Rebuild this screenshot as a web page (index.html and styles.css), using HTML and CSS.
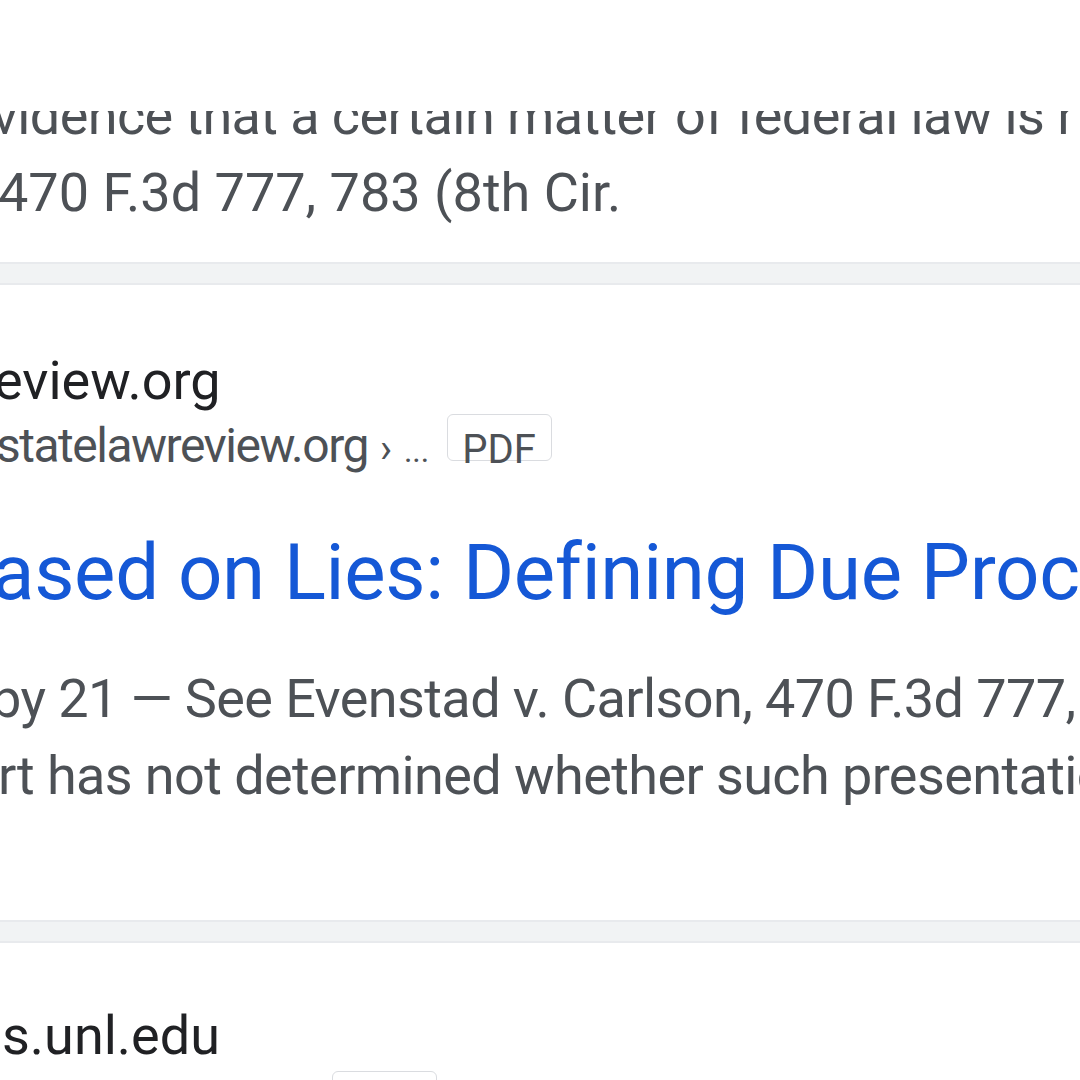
FILE: index.html
```html
<!DOCTYPE html>
<html lang="en">
<head>
<meta charset="utf-8">
<title>Search results</title>
<link rel="stylesheet" href="styles.css">
</head>
<body>
<div class="topbar"></div>
<main class="results">
  <section class="card card-first">
    <div class="snippet">
      <div class="line cut-ev">evidence that a certain matter of federal law is r</div>
      <div class="line cut-47 wide">470 F.3d 777, 783 (8th Cir.</div>
    </div>
  </section>
  <div class="sep"></div>
  <section class="card">
    <div class="site cut-site">eview.org</div>
    <div class="url">
      <span class="url-text cut-url">statelawreview.org</span>
      <span class="crumb">›</span>
      <span class="dots">...</span>
      <span class="badge">PDF</span>
    </div>
    <div class="title cut-title">ased on Lies: Defining Due Process</div>
    <div class="snippet">
      <div class="line cut-by">by 21 — See Evenstad v. Carlson, 470 F.3d 777, 783</div>
      <div class="line cut-rt">rt has not determined whether such presentation</div>
    </div>
  </section>
  <div class="sep"></div>
  <section class="card card-last">
    <div class="site cut-s">s.unl.edu</div>
    <div class="url">
      <span class="url-text spacer-url">digitalcommons.u</span>
      <span class="badge badge-low">PDF</span>
    </div>
  </section>
</main>
</body>
</html>
```

FILE: styles.css
```css
html, body {
  margin: 0;
  padding: 0;
  background: #ffffff;
}
body {
  width: 1080px;
  height: 1080px;
  overflow: hidden;
  font-family: Roboto, "Liberation Sans", sans-serif;
  position: relative;
}
.topbar {
  position: fixed;
  top: 0;
  left: 0;
  right: 0;
  height: 111px;
  background: #ffffff;
  z-index: 5;
}
.results {
  display: flex;
  flex-direction: column;
}
.card {
  display: flex;
  flex-direction: column;
  padding: 61px 0 106px 0;
  overflow: hidden;
}
.card-first {
  padding: 77px 0 31px 0;
}
.card-last {
  padding: 58px 0 40px 0;
}
.sep {
  height: 19px;
  background: #f1f3f4;
  border-top: 2px solid #e8eaed;
  border-bottom: 2px solid #e8eaed;
}
.line, .site, .title, .url {
  white-space: nowrap;
}
.snippet {
  display: flex;
  flex-direction: column;
  font-size: 54px;
  line-height: 77px;
  letter-spacing: -0.6px;
  color: #4d5156;
}
.wide {
  letter-spacing: 0;
}
.site {
  font-size: 54px;
  line-height: 70px;
  color: #202124;
}
.url {
  display: flex;
  align-items: baseline;
  font-size: 48px;
  line-height: 60px;
  color: #4d5156;
}
.url-text {
  letter-spacing: -1.5px;
}
.crumb {
  margin-left: 12px;
  font-size: 40px;
}
.dots {
  margin-left: 12px;
  font-size: 32px;
}
.badge {
  align-self: flex-start;
  margin-top: -2px;
  margin-left: 18px;
  box-sizing: border-box;
  height: 47px;
  font-size: 40px;
  line-height: 70px;
  padding: 0 15px 0 14px;
  border: 1.5px solid #dadce0;
  border-radius: 6px;
  color: #4d5156;
}
.badge-low {
  margin-left: 22px;
  margin-top: 0;
}
.title {
  margin-top: 42px;
  margin-bottom: 37px;
  font-size: 78px;
  line-height: 100px;
  letter-spacing: -0.3px;
  color: #1558d6;
}
.cut-ev { margin-left: -36px; }
.cut-47 { margin-left: -2px; }
.cut-site { margin-left: -6px; }
.cut-url { margin-left: -4px; }
.cut-title { margin-left: -8px; }
.cut-by { margin-left: -9px; }
.cut-rt { margin-left: -2px; }
.cut-s { margin-left: 2px; }
.spacer-url { visibility: hidden; width: 310px; overflow: hidden; }
```
